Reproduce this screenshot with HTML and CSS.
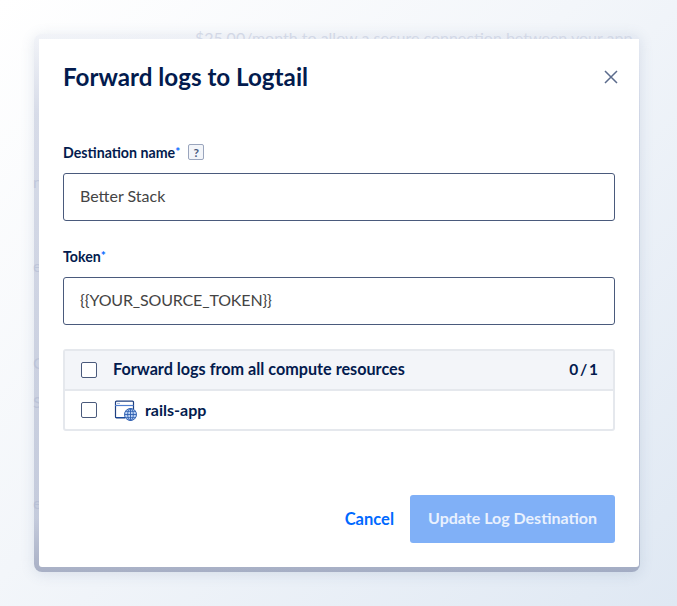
FILE: index.html
```html
<!DOCTYPE html>
<html lang="en">
<head>
<meta charset="utf-8">
<title>Forward logs to Logtail</title>
<link rel="stylesheet" href="styles.css">
</head>
<body>
<div class="backdrop">
  <p class="behind behind-top">$25.00/month to allow a secure connection between your app</p>
  <span class="behind behind-a">n</span>
  <span class="behind behind-b">e</span>
  <span class="behind behind-c">C</span>
  <span class="behind behind-d">S</span>
  <span class="behind behind-e">e</span>
</div>
<div class="frame">
  <div class="modal">
    <header class="modal-head">
      <h1 class="title">Forward logs to Logtail</h1>
      <button class="close" aria-label="Close">
        <svg width="14" height="14" viewBox="0 0 14 14"><path d="M1 1l12 12M13 1L1 13" fill="none" stroke="#5b6b8c" stroke-width="1.5"/></svg>
      </button>
    </header>
    <div class="field">
      <div class="label-row">
        <label class="label">Destination name<sup class="req">*</sup></label>
        <span class="help">?</span>
      </div>
      <div class="input">Better Stack</div>
    </div>
    <div class="field">
      <div class="label-row">
        <label class="label">Token<sup class="req">*</sup></label>
      </div>
      <div class="input token">{{YOUR_SOURCE_TOKEN}}</div>
    </div>
    <div class="resources">
      <div class="res-head">
        <span class="check"></span>
        <span class="res-title">Forward logs from all compute resources</span>
        <span class="res-count">0 / 1</span>
      </div>
      <div class="res-row">
        <span class="check"></span>
        <svg class="app-icon" width="23" height="21" viewBox="0 0 23 21">
          <path d="M1.5 17.5h10" fill="none" stroke="#0069ff" stroke-width="1"/>
          <path d="M19.5 9V2.2a1 1 0 0 0-1-1h-16a1 1 0 0 0-1 1v14.6a1 1 0 0 0 1 1H11" fill="none" stroke="#1f3f7f" stroke-width="1.2"/>
          <path d="M1 5.5h18.5" fill="none" stroke="#4f7fd0" stroke-width="1.2"/>
          <path d="M3 3.4h3" fill="none" stroke="#9db4dc" stroke-width="1"/>
          <circle cx="16.5" cy="14.5" r="6" fill="#bcd3f5" stroke="#2f5fb0" stroke-width="1"/>
          <path d="M10.5 14.5h12M16.5 8.5v12M11.5 11.3h10M11.5 17.7h10" fill="none" stroke="#2f5fb0" stroke-width=".9"/>
          <ellipse cx="16.5" cy="14.5" rx="2.8" ry="6" fill="none" stroke="#2f5fb0" stroke-width=".9"/>
        </svg>
        <span class="res-name">rails-app</span>
      </div>
    </div>
    <footer class="actions">
      <a class="cancel">Cancel</a>
      <button class="submit">Update Log Destination</button>
    </footer>
  </div>
</div>
</body>
</html>
```
FILE: styles.css
```css
* { box-sizing: border-box; }
html, body { margin: 0; height: 100%; }
body {
  width: 677px;
  height: 606px;
  overflow: hidden;
  position: relative;
  font-family: Lato, "Liberation Sans", sans-serif;
  background: linear-gradient(135deg, #ffffff 0%, #f3f6fa 45%, #dfe8f3 100%);
}
.backdrop { position: absolute; inset: 0; }
.behind {
  position: absolute;
  margin: 0;
  color: #d9deea;
  font-size: 16px;
  line-height: 20px;
  white-space: nowrap;
}
.behind-top { left: 195px; top: 28px; letter-spacing: 0; }
.behind-a { left: 33px; top: 172px; }
.behind-b { left: 33px; top: 256px; }
.behind-c { left: 33px; top: 353px; }
.behind-d { left: 33px; top: 392px; }
.behind-e { left: 33px; top: 493px; }
.frame {
  position: absolute;
  left: 34px;
  top: 34px;
  width: 606px;
  height: 538px;
  padding: 5px 1px 5px 5px;
  border-radius: 8px;
  background: linear-gradient(180deg, rgba(180,190,215,.16) 0%, rgba(160,170,200,.4) 15%, rgba(150,160,190,.5) 90%, rgba(130,140,170,.66) 100%);
  box-shadow: 0 2px 14px rgba(90,110,150,.16);
}
.modal {
  width: 600px;
  height: 528px;
  background: #fff;
  border-radius: 0 0 3px 3px;
  padding: 0 24px 0 24px;
  display: flex;
  flex-direction: column;
  color: #031b4e;
}
.modal-head {
  display: flex;
  justify-content: space-between;
  align-items: center;
  padding-top: 23px;
  height: 53px;
  margin-bottom: 50px;
}
.title { margin: 0; font-size: 24.2px; line-height: 30px; font-weight: 700; }
.close { border: 0; background: none; padding: 0; margin-right: -3px; display: flex; }
.field { margin-bottom: 25px; }
.label-row { display: flex; align-items: center; gap: 8px; height: 20px; margin-bottom: 11px; }
.label { font-size: 14.2px; font-weight: 700; }
.req { color: #0069ff; font-size: 12px; line-height: 0; vertical-align: 2px; }
.help {
  width: 16px; height: 16px;
  border: 1px solid #9aa5bd;
  border-radius: 2px;
  font-size: 12px; font-weight: 700;
  color: #4a5a7c;
  background: #f3f5f9;
  display: flex; align-items: center; justify-content: center;
}
.input {
  width: 552px;
  height: 48px;
  border: 1px solid #4a5a7c;
  border-radius: 3px;
  padding: 0 16px 4px;
  display: flex;
  align-items: center;
  font-size: 16px;
  color: #444;
}
.token { letter-spacing: -.15px; }
.resources {
  margin-top: -1px;
  width: 552px;
  border: 2px solid #e5e8ed;
  border-radius: 3px;
}
.res-head {
  height: 40px;
  background: #f3f5f9;
  border-bottom: 2px solid #e5e8ed;
  display: flex;
  align-items: center;
  padding: 0 15px 0 16px;
}
.res-row { height: 38px; display: flex; align-items: center; padding: 0 16px; }
.check { width: 16px; height: 16px; border: 1px solid #4a5a7c; border-radius: 2px; background: #fff; flex: none; }
.res-title { margin-left: 16px; margin-bottom: 3px; font-size: 16.2px; font-weight: 700; flex: 1; }
.res-count { margin-bottom: 2px; font-size: 15.5px; font-weight: 700; word-spacing: -2px; }
.app-icon { margin-left: 17px; flex: none; }
.res-name { margin-left: 8px; margin-bottom: 2px; font-size: 16px; font-weight: 700; }
.actions {
  margin-top: auto;
  margin-bottom: 24px;
  display: flex;
  justify-content: flex-end;
  align-items: center;
  gap: 16px;
}
.cancel { color: #0069ff; font-size: 16.5px; font-weight: 700; }
.submit {
  width: 205px;
  height: 48px;
  border: 0;
  border-radius: 3px;
  background: #80b0f7;
  color: #e9f1fe;
  font-family: inherit;
  font-size: 16px;
  font-weight: 700;
  padding: 0 0 3px;
}
```
